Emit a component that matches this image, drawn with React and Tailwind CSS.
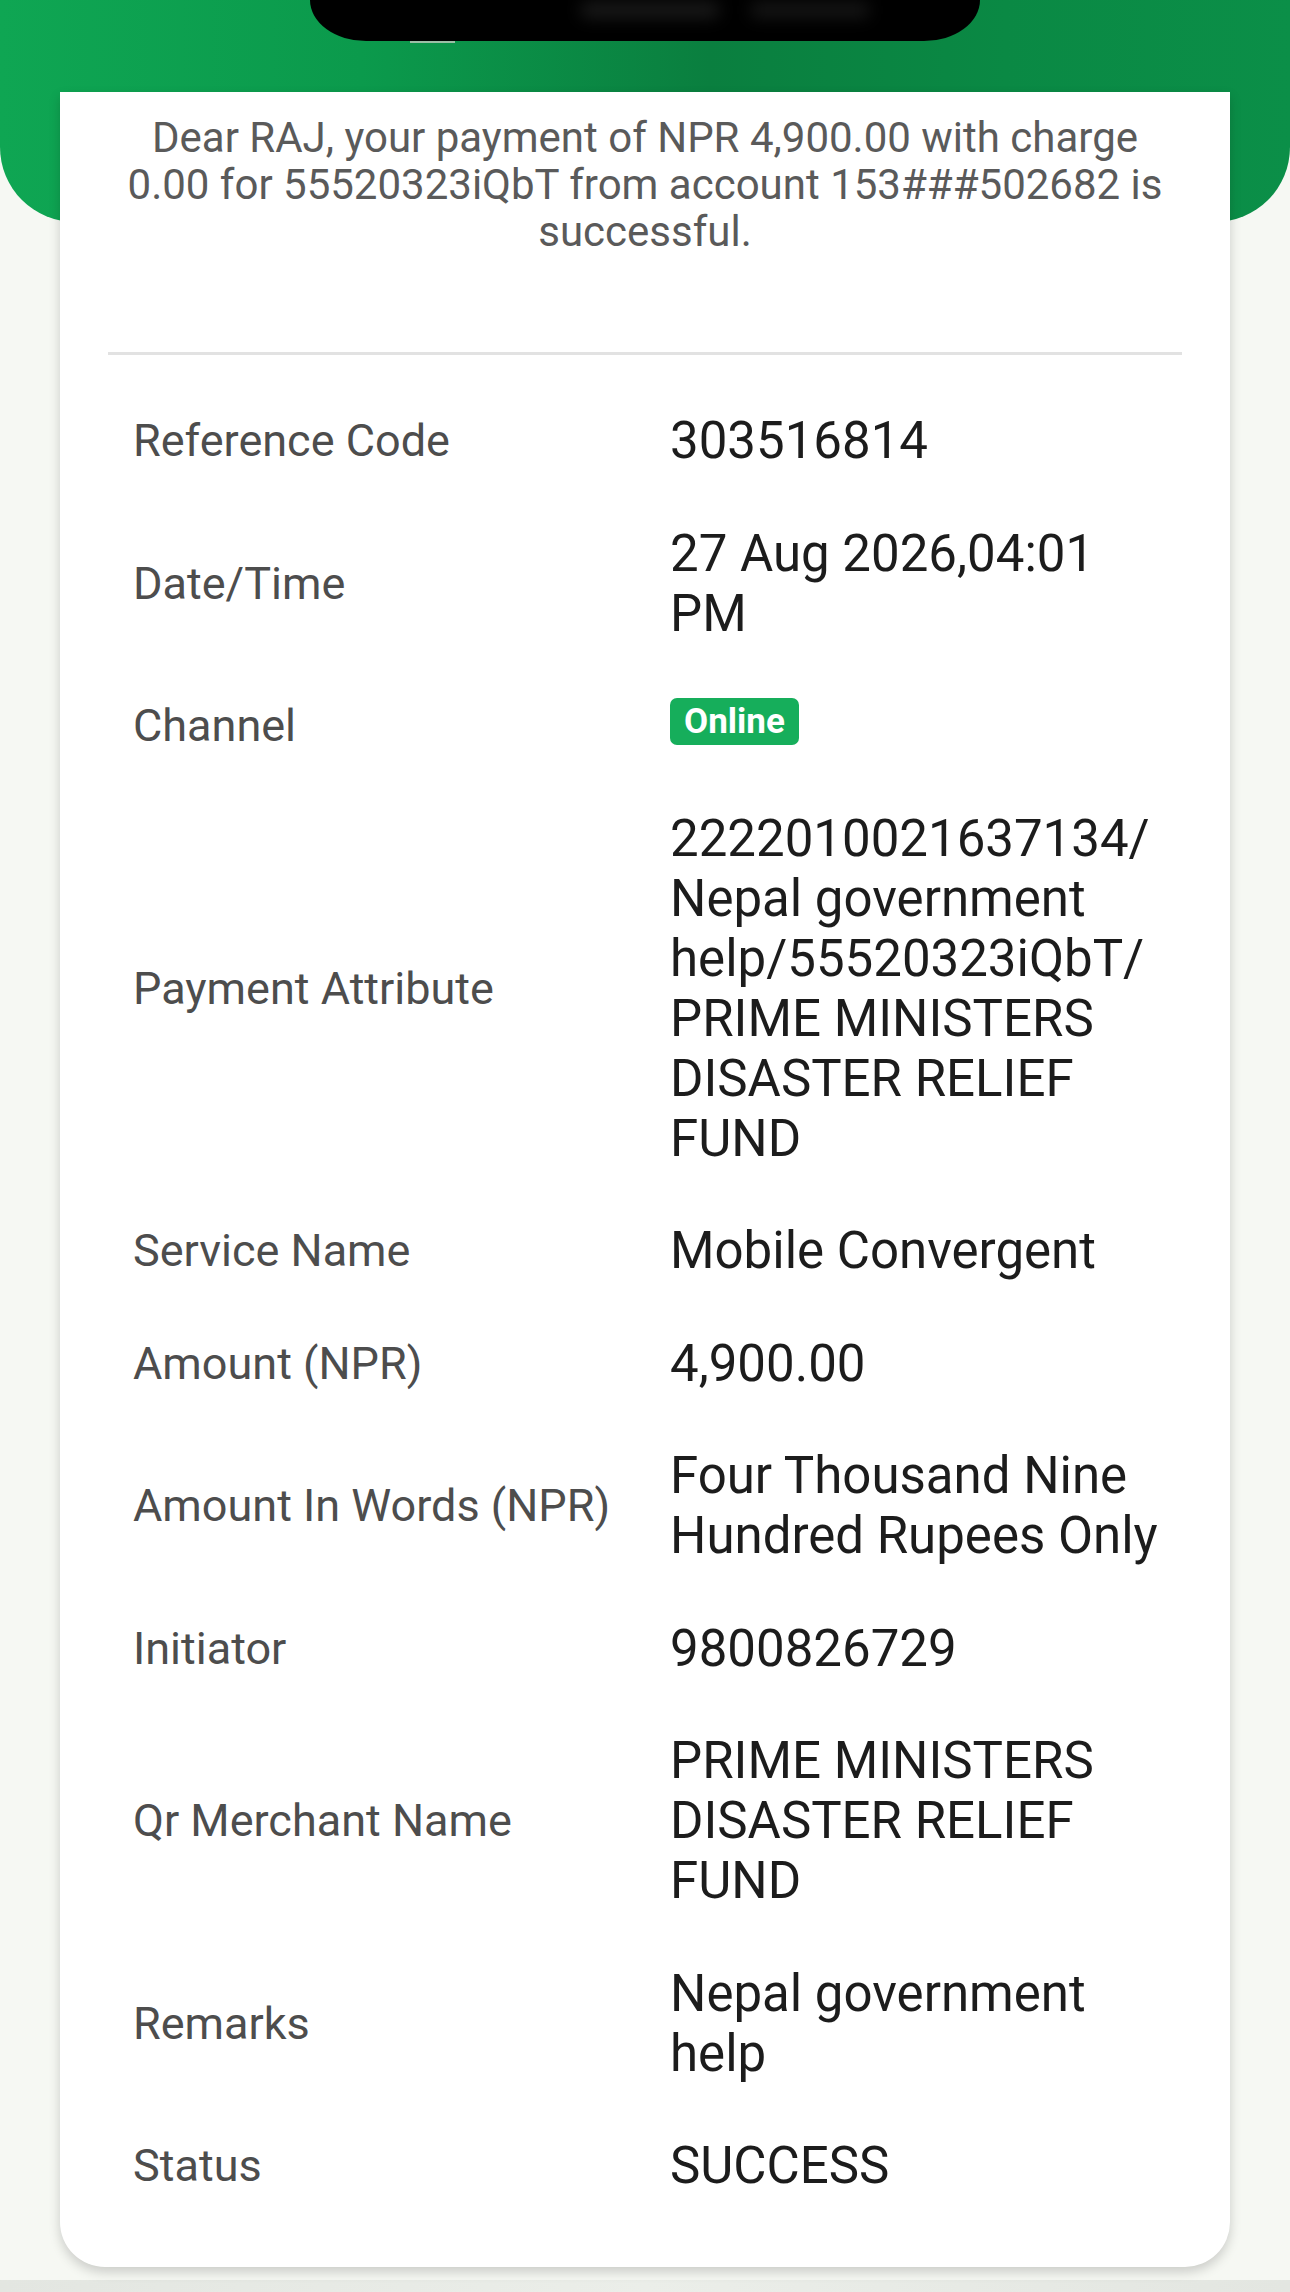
import React from 'react';

const rows = [
  { label: 'Reference Code', value: '303516814' },
  { label: 'Date/Time', value: '27 Aug 2026,04:01 PM' },
  { label: 'Channel', badge: 'Online' },
  {
    label: 'Payment Attribute',
    value: '2222010021637134/Nepal government help/55520323iQbT/PRIME MINISTERS DISASTER RELIEF FUND',
  },
  { label: 'Service Name', value: 'Mobile Convergent' },
  { label: 'Amount (NPR)', value: '4,900.00' },
  { label: 'Amount In Words (NPR)', value: 'Four Thousand Nine Hundred Rupees Only' },
  { label: 'Initiator', value: '9800826729' },
  { label: 'Qr Merchant Name', value: 'PRIME MINISTERS DISASTER RELIEF FUND' },
  { label: 'Remarks', value: 'Nepal government help' },
  { label: 'Status', value: 'SUCCESS' },
];

// let long ids wrap after a slash
const withBreaks = (text) => {
  const parts = text.split('/');
  return parts.map((p, i) => (
    <React.Fragment key={i}>
      {p}
      {i < parts.length - 1 && (
        <>
          /<wbr />
        </>
      )}
    </React.Fragment>
  ));
};

const DetailRow = ({ label, value, badge }) => (
  <div className="flex items-center">
    <div className="w-[537px] shrink-0 text-[45px] leading-[60px] text-[#4d4d4d]">{label}</div>
    {badge ? (
      <div className="flex h-[60px] w-[495px] items-center">
        <span className="inline-flex h-[47px] -translate-y-[5px] items-center rounded-[7px] bg-[#16ae5b] px-[14px] text-[35px] font-bold leading-none text-white">
          {badge}
        </span>
      </div>
    ) : (
      <div className="w-[495px] text-[51px] leading-[60px] text-[#1c1c1c]">{withBreaks(value)}</div>
    )}
  </div>
);

export default function App() {
  return (
    <div
      className="flex min-h-[2292px] flex-col bg-[#f6f8f3]"
      style={{ fontFamily: 'Roboto, "Noto Sans", Arial, sans-serif' }}
    >
      {/* Green header with camera notch */}
      <div className="flex h-[222px] shrink-0 justify-center rounded-b-[75px] bg-[linear-gradient(90deg,#0fa653_0%,#0b9a4c_28%,#0a7f3f_55%,#0a8944_78%,#0b8f48_100%)]">
        <div className="relative h-[41px] w-[670px] rounded-b-[56px_41px] bg-black">
          <div className="absolute left-[270px] top-[2px] h-[16px] w-[140px] rounded-full bg-[#1a1a1a] blur-[8px]" />
          <div className="absolute left-[440px] top-[2px] h-[16px] w-[120px] rounded-full bg-[#161616] blur-[8px]" />
          <div className="absolute -bottom-[2px] left-[100px] h-[2px] w-[45px] bg-[#9bbfa6]" />
        </div>
      </div>

      {/* Receipt card */}
      <div className="relative mx-[60px] -mt-[130px] rounded-b-[45px] bg-white pb-[71px] pt-[22px] shadow-[0_5px_12px_rgba(0,0,0,0.18)]">
        <p className="mx-[64px] text-center text-[42px] leading-[47px] text-[#5a5a5a]">
          Dear RAJ, your payment of NPR 4,900.00 with charge 0.00 for 55520323iQbT from account 153###502682 is
          successful.
        </p>

        <div className="mx-[48px] mt-[97px] h-[3px] bg-[#e2e2e2]" />

        <div className="flex flex-col gap-[52.5px] pl-[73px] pt-[56px]">
          {rows.map((r) => (
            <DetailRow key={r.label} {...r} />
          ))}
        </div>
      </div>

      <div className="mt-auto h-[12px] bg-gradient-to-r from-[#e3e6e1] via-[#ebeee9] to-[#e3e6e1]" />
    </div>
  );
}
